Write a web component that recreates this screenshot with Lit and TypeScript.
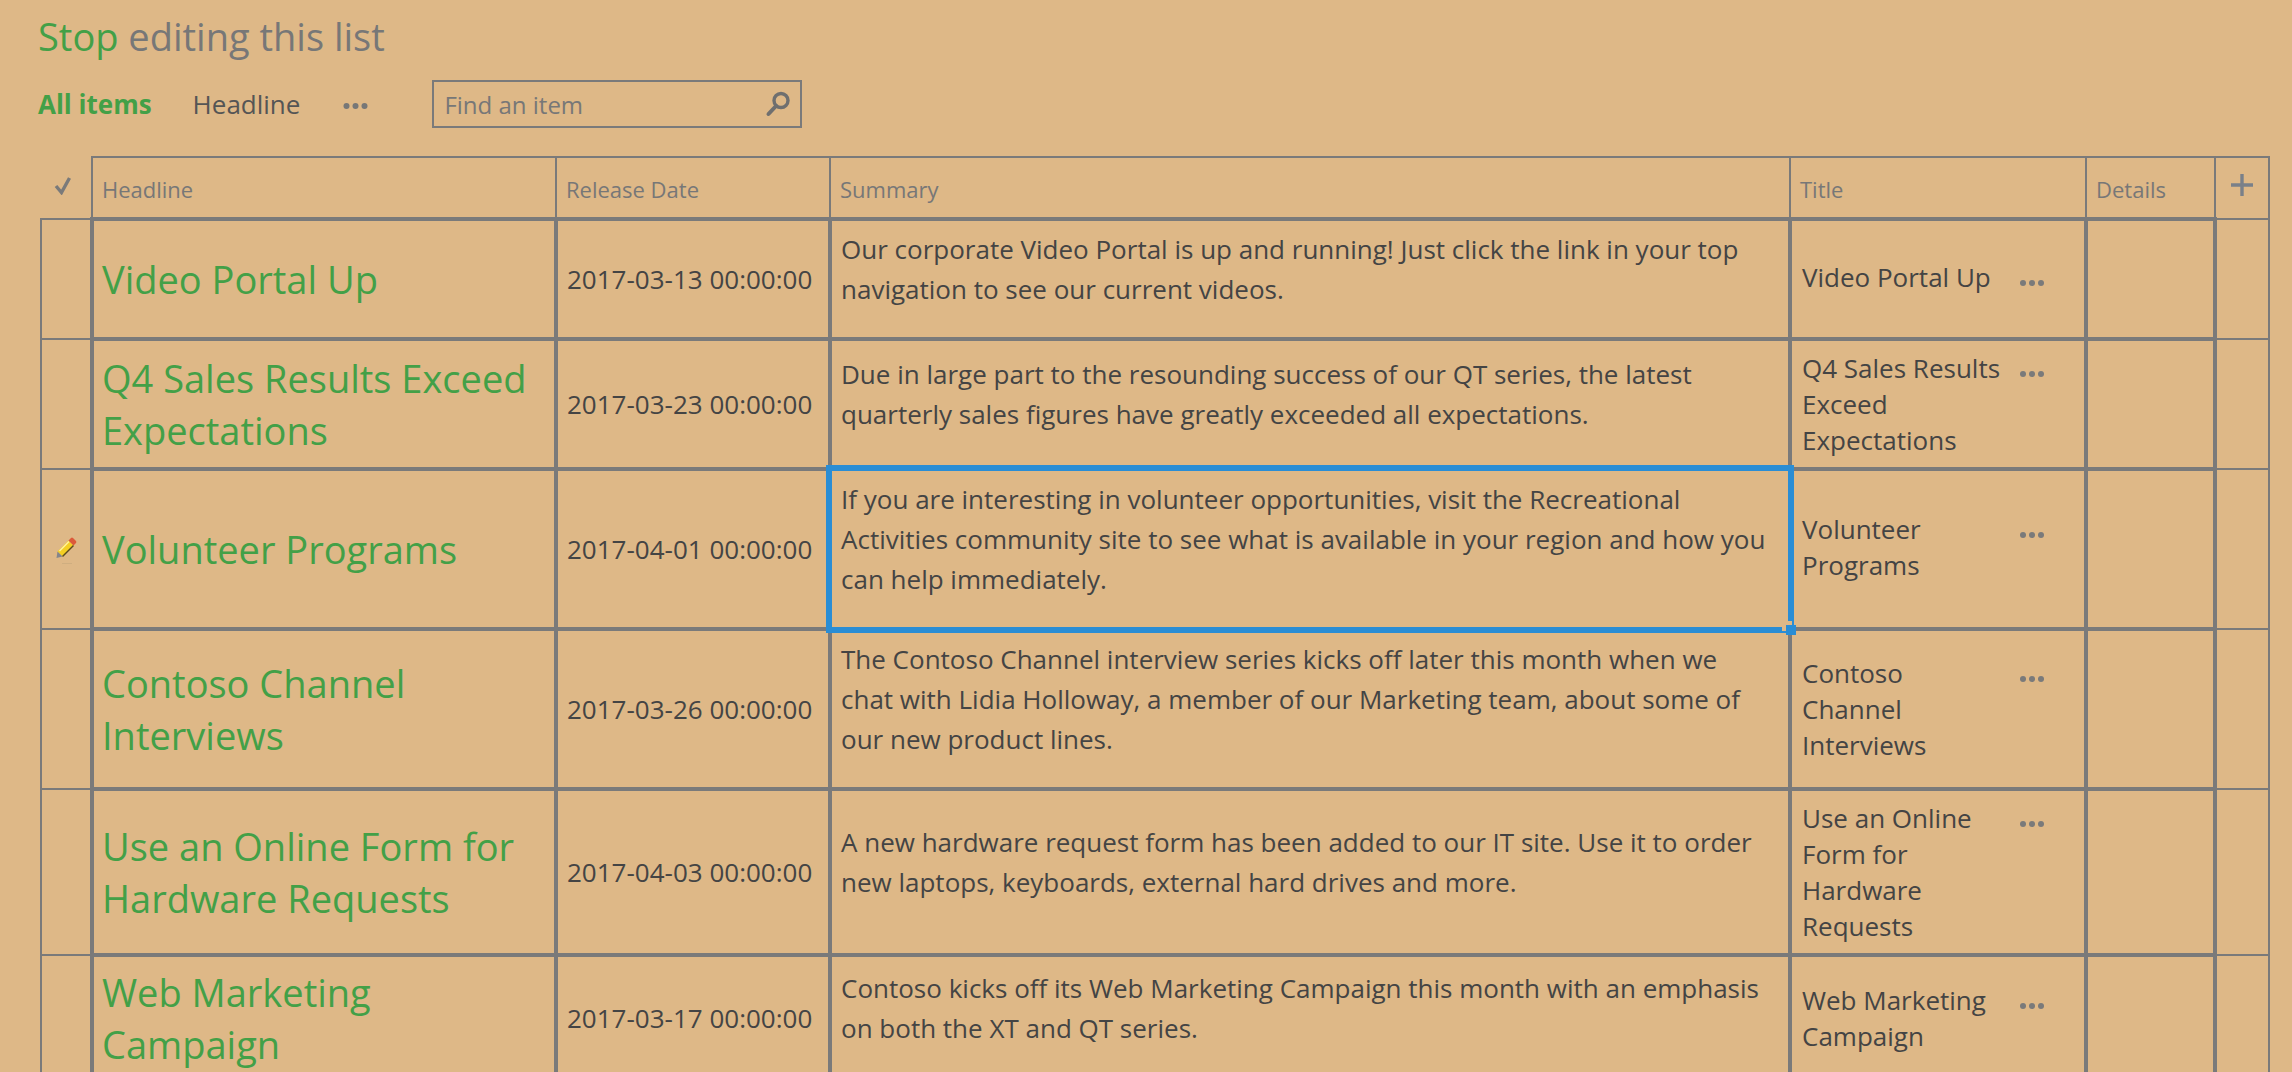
import { LitElement, html, css, svg } from "lit";
import { customElement } from "lit/decorators.js";

const rows = [
  { h: "Video Portal Up", d: "2017-03-13 00:00:00", s: "Our corporate Video Portal is up and running! Just click the link in your top navigation to see our current videos.", t: "Video Portal Up", alt: true },
  { h: "Q4 Sales Results Exceed Expectations", d: "2017-03-23 00:00:00", s: "Due in large part to the resounding success of our QT series, the latest quarterly sales figures have greatly exceeded all expectations.", t: "Q4 Sales Results Exceed Expectations" },
  { h: "Volunteer Programs", d: "2017-04-01 00:00:00", s: "If you are interesting in volunteer opportunities, visit the Recreational Activities community site to see what is available in your region and how you can help immediately.", t: "Volunteer Programs", editing: true, alt: true },
  { h: "Contoso Channel Interviews", d: "2017-03-26 00:00:00", s: "The Contoso Channel interview series kicks off later this month when we chat with Lidia Holloway, a member of our Marketing team, about some of our new product lines.", t: "Contoso Channel Interviews" },
  { h: "Use an Online Form for Hardware Requests", d: "2017-04-03 00:00:00", s: "A new hardware request form has been added to our IT site. Use it to order new laptops, keyboards, external hard drives and more.", t: "Use an Online Form for Hardware Requests" },
  { h: "Web Marketing Campaign", d: "2017-03-17 00:00:00", s: "Contoso kicks off its Web Marketing Campaign this month with an emphasis on both the XT and QT series.", t: "Web Marketing Campaign" },
];

const dots = (w: number, cls: string) => html`<svg class=${cls} width=${w} height="8" viewBox="0 0 26 8"><circle cx="4" cy="4" r="3"/><circle cx="13" cy="4" r="3"/><circle cx="22" cy="4" r="3"/></svg>`;

const pencil = svg`<svg class="pencil" width="24" height="28" viewBox="0 0 24 28">
  <path d="M2.5 15.5 L13.5 4.5 L18.5 9.5 L7.5 20.5Z" fill="#f4cf24"/>
  <path d="M4.5 15 L14 5.5" stroke="#fff2a0" stroke-width="1.4"/>
  <path d="M7.5 20.5 L18.5 9.5" stroke="#5a4a20" stroke-width="1.4"/>
  <path d="M13.5 4.5 L16 2 Q17 1.2 18 2 L21 5 Q21.8 6 21 7 L18.5 9.5Z" fill="#dc5a3a"/>
  <path d="M2.5 15.5 L7.5 20.5 L1.5 22Z" fill="#85858a"/>
  <path d="M7 27.5 H17" stroke="#cfae80" stroke-width="1"/>
</svg>`;

@customElement("app-root")
export class AppRoot extends LitElement {
  static styles = css`
    :host {
      display: block;
      height: 100vh;
      overflow: hidden;
      background: #deb887;
      color: #444;
      font-family: "Open Sans", sans-serif;
      box-sizing: border-box;
      padding: 11px 0 0 40px;
    }
    .heading { font-size: 38px; line-height: 50px; color: #777; margin-left: -2px; }
    .heading b { font-weight: 400; color: #43a047; }
    .nav { display: flex; align-items: center; height: 48px; margin-top: 19px; font-size: 26px; margin-left: -2px; }
    .nav .all { font-weight: 700; color: #43a047; margin-right: 41px; }
    .nav .hl { color: #555; margin-right: 42px; }
    .nav .more { fill: #777; margin-right: 63px; margin-top: 4px; }
    .search {
      width: 370px; height: 48px; box-sizing: border-box;
      border: 2px solid #7a7a7a;
      display: flex; align-items: center; justify-content: space-between;
      padding: 0 8px 0 10px;
      font-size: 24px; color: #777;
    }
    table {
      border-collapse: collapse; table-layout: fixed; width: 2228px;
      margin-top: 28px;
    }
    th {
      border: 2px solid #7a7a7a; height: 62px; box-sizing: border-box;
      font-weight: 400; font-size: 22px; color: #777; text-align: left;
      padding: 2px 10px 0 9px;
    }
    th.check { border-top: none; border-left: none; padding: 0; text-align: center; vertical-align: top; }
    th.add { padding: 0; text-align: center; vertical-align: top; }
    th svg { display: block; }
    .check svg { margin: 20px 0 0 13px; }
    .add svg { margin: 16px 0 0 15px; }
    td {
      border: 4px solid #7a7a7a; padding: 0 10px 0 9px; font-size: 26px; vertical-align: middle;
    }
    td.sel, td.end { border-width: 2px; padding: 0; }
    .pencil { display: block; margin: 2px 0 0 13px; }
    td.headline { font-size: 38px; line-height: 52px; color: #43a047; padding: 9px 10px 9px 8px; }
    td.date { white-space: nowrap; padding-right: 0; }
    td.summary { line-height: 40px; padding: 8px 18px 28px 9px; position: relative; }
    td.titlecell { padding: 9px 10px; }
    .title { display: flex; align-items: flex-start; line-height: 36px; }
    .title.alt { margin-top: -4px; }
    .title span { width: 200px; }
    .title svg { fill: #7a7a7a; margin: 20px 0 0 17px; flex: none; }
    .focus {
      position: absolute; inset: -6px;
      border: 6px solid #2a8dd4; pointer-events: none;
    }
    .handle {
      position: absolute; right: -8px; bottom: -8px; width: 10px; height: 10px;
      background: #2a8dd4; box-shadow: -4px -4px 0 0 #deb887;
    }
  `;

  render() {
    return html`
      <div class="heading"><b>Stop</b> editing this list</div>
      <div class="nav">
        <span class="all">All items</span>
        <span class="hl">Headline</span>
        ${dots(27, "more")}
        <div class="search">
          <span>Find an item</span>
          <svg width="28" height="28" viewBox="0 0 28 28" fill="none" stroke="#6f6f6f">
            <circle cx="17" cy="10.5" r="7" stroke-width="3.4"/>
            <path d="M12 16 L4.5 24" stroke-width="4" stroke-linecap="round"/>
          </svg>
        </div>
      </div>
      <table>
        <colgroup>
          <col style="width:51px"/><col style="width:464px"/><col style="width:274px"/><col style="width:960px"/><col style="width:296px"/><col style="width:129px"/><col style="width:54px"/>
        </colgroup>
        <thead>
          <tr>
            <th class="check">
              <svg width="20" height="18" viewBox="0 0 20 18" fill="none" stroke="#7a7a7a" stroke-width="3.4"><path d="M2 9 L7.5 15.5 L15.5 1"/></svg>
            </th>
            <th>Headline</th><th>Release Date</th><th>Summary</th><th>Title</th><th>Details</th>
            <th class="add">
              <svg width="22" height="22" viewBox="0 0 22 22" stroke="#7a8089" stroke-width="3.4"><path d="M11 0V22M0 11H22"/></svg>
            </th>
          </tr>
        </thead>
        <tbody>
          ${rows.map((r) => html`
            <tr>
              <td class="sel">${r.editing ? pencil : ""}</td>
              <td class="headline">${r.h}</td>
              <td class="date">${r.d}</td>
              <td class="summary">${r.s}${r.editing ? html`<div class="focus"><div class="handle"></div></div>` : ""}</td>
              <td class="titlecell"><div class="title ${r.alt ? "alt" : ""}"><span>${r.t}</span>${dots(26, "")}</div></td>
              <td></td>
              <td class="end"></td>
            </tr>`)}
        </tbody>
      </table>
    `;
  }
}
